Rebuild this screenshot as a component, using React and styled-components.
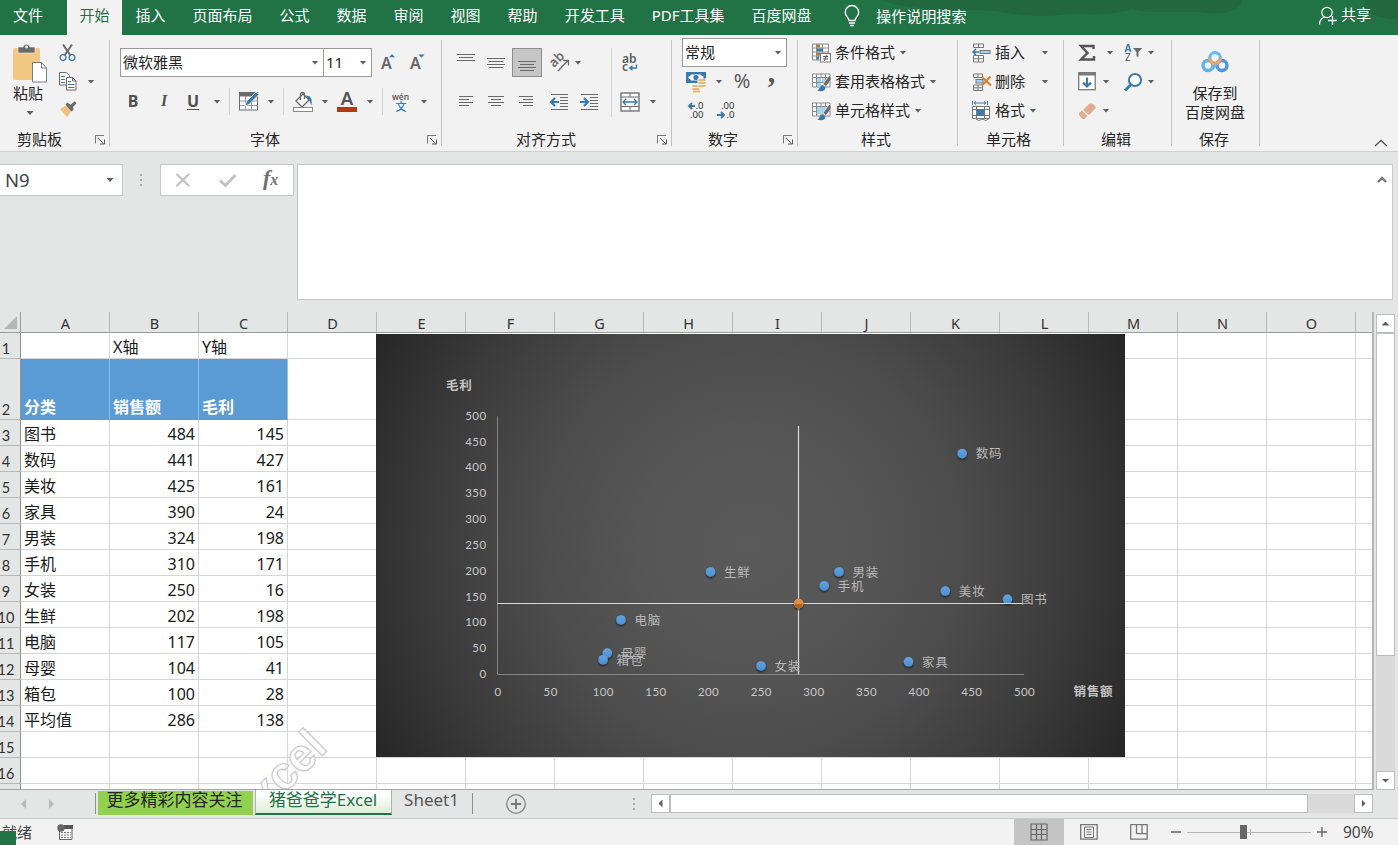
import React from 'react';
import styled, { createGlobalStyle } from 'styled-components';

const grey = '#6a6a6a';
const blue = '#3d7aab';
const sans = '"Noto Sans", "Noto Sans CJK SC", sans-serif';

const columns = ['A', 'B', 'C', 'D', 'E', 'F', 'G', 'H', 'I', 'J', 'K', 'L', 'M', 'N', 'O'];

const rows = [
    ['', 'X轴', 'Y轴'],
    ['分类', '销售额', '毛利'],
    ['图书', 484, 145],
    ['数码', 441, 427],
    ['美妆', 425, 161],
    ['家具', 390, 24],
    ['男装', 324, 198],
    ['手机', 310, 171],
    ['女装', 250, 16],
    ['生鲜', 202, 198],
    ['电脑', 117, 105],
    ['母婴', 104, 41],
    ['箱包', 100, 28],
    ['平均值', 286, 138],
    [],
    [],
];

const points = rows.slice(2, 13);
const ticks = [0, 50, 100, 150, 200, 250, 300, 350, 400, 450, 500];

const tabs = ['插入', '页面布局', '公式', '数据', '审阅', '视图', '帮助', '开发工具', 'PDF工具集', '百度网盘'];

/* ---------- icons ---------- */

function Icon({ w = 18, h = 18, children })
{
    return <IconSvg width={w} height={h} viewBox={`0 0 ${w} ${h}`} fill="none">{children}</IconSvg>;
}

function Lines({ ys, xs, w = 18, h = 20 })
{
    return (
        <Icon w={w} h={h}>
            {ys.map((y, i) => (
                <path key={y} d={`M${xs[i % xs.length][0]} ${y}.5H${xs[i % xs.length][1]}`} stroke={grey} />
            ))}
        </Icon>
    );
}

const PasteIcon = () => (
    <Icon w={36} h={40}>
        <rect x="1" y="5" width="27" height="32" rx="1.5" fill="#f2c883" />
        <path d="M6 4h5a3.6 3.6 0 0 1 7 0h5v6H6z" fill={grey} stroke="#f2f2f2" strokeWidth=".6" />
        <circle cx="14.5" cy="4" r="1.4" fill="#f2f2f2" />
        <path d="M20.5 19.500h9l5 5.500v14h-14z" fill="#fff" stroke="#7b7b7b" />
        <path d="M29.500 19.500v5.500h5" stroke="#7b7b7b" />
    </Icon>
);

const CutIcon = () => (
    <Icon w={18} h={19}>
        <path d="M4 1.500l7.500 11M13 1.500L5.500 12.500" stroke={grey} strokeWidth="2" />
        <circle cx="4" cy="14.500" r="2.900" stroke={blue} strokeWidth="1.300" />
        <circle cx="13" cy="14.500" r="2.900" stroke={blue} strokeWidth="1.300" />
    </Icon>
);

const CopyIcon = () => (
    <Icon w={18} h={19}>
        <path d="M.5.5h7l3 3v9.500h-10z" fill="#fff" stroke={grey} />
        <path d="M2 4.500h4M2 7.500h4M2 10.500h4" stroke={blue} />
        <path d="M7.500 5.500h6l3.500 3.500v9h-9.500z" fill="#fff" stroke={grey} />
        <path d="M13.500 5.500v3.500h3.500" stroke={grey} />
        <path d="M9 9.500h3M9 12.500h6.500M9 15.500h6.500" stroke={blue} />
    </Icon>
);

const BrushIcon = () => (
    <Icon w={18} h={17}>
        <path d="M1 8l6-3.500 5.500 5.500L8 16z" fill="#edc083" />
        <path d="M6.500 3.500l2-2 3.200 2.200L15.500.3l2 2-3.500 3.700.5 2.500-2 2z" fill={grey} />
    </Icon>
);

const BorderIcon = () => (
    <Icon w={20} h={19}>
        <rect x=".5" y=".5" width="18" height="17.500" fill="#fff" stroke={grey} />
        <path d="M0 0h19v4.500H0z" fill={grey} />
        <path d="M6.500 4v14M12.500 4v14M1 9h18M1 13.500h18" stroke="#9a9a9a" />
        <path d="M6 14l1.500-4.500L17 0l3 2.500-10 10z" fill={blue} stroke="#f2f2f2" strokeWidth=".8" />
    </Icon>
);

const FillIcon = () => (
    <Icon w={21} h={20}>
        <path d="M3 9l7-7 6 6-7 7z" fill="#fff" stroke={grey} strokeWidth="1.300" />
        <path d="M7.500 8V2.500a2 2 0 0 1 4 0V7" stroke={grey} strokeWidth="1.300" />
        <path d="M13 3.500c4.500 0 6.500 3 5.500 10-1-1-1-4-3-5.500z" fill={blue} />
        <rect x=".5" y="15.500" width="19" height="4" fill="#fff" stroke="#8a8a8a" />
    </Icon>
);

const FontColorIcon = () => (
    <Icon w={20} h={20}>
        <text x="10" y="13" textAnchor="middle" fontFamily={sans} fontSize="18.500" fontWeight="600" fill="#555">A</text>
        <rect y="15" width="20" height="5" fill="#b03a12" />
    </Icon>
);

const PinyinIcon = () => (
    <Icon w={18} h={20}>
        <text x="8.500" y="7.500" textAnchor="middle" fontFamily={sans} fontSize="8.500" fontWeight="500" fill="#4a4a4a">wén</text>
        <text x="9" y="18.500" textAnchor="middle" fontFamily={sans} fontSize="11" fontWeight="500" fill="#2f7fc4">文</text>
    </Icon>
);

const GrowIcon = ({ down }) => (
    <Icon w={18} h={20}>
        <text x="0" y="16" fontFamily={sans} fontSize="16" fontWeight="600" fill="#666">A</text>
        <path d={down ? 'M8.500 1.500h6l-3 3.200z' : 'M8 4.200h6l-3-3.200z'} fill={blue} />
    </Icon>
);

const OrientIcon = () => (
    <Icon w={20} h={20}>
        <text x="0" y="0" transform="translate(4 15) rotate(-45)" fontFamily={sans} fontSize="13" fontWeight="600" fill="#6f6f6f">ab</text>
        <path d="M8 18l9.500-10M13 7.500h5.500v5" stroke={grey} strokeWidth="1.300" />
    </Icon>
);

const WrapIcon = () => (
    <Icon w={19} h={20}>
        <text x="2" y="9.500" fontFamily={sans} fontSize="12" fontWeight="600" fill="#5c5c5c">ab</text>
        <text x="2" y="18" fontFamily={sans} fontSize="12" fontWeight="600" fill="#5c5c5c">c</text>
        <path d="M16.500 11.500v3.500h-6" stroke={blue} strokeWidth="1.300" />
        <path d="M8.500 15l4-3v6z" fill={blue} />
    </Icon>
);

const IndentIcon = ({ right }) => (
    <Icon w={19} h={18}>
        <path d="M1 1.500h17M10 4.500h8M10 7.500h8M10 10.500h8M10 13.500h8M1 16.500h17" stroke={grey} />
        <path d={right ? 'M0 9h7M4 5l4 4-4 4' : 'M9 9H2M5 5L1 9l4 4'} stroke={blue} strokeWidth="2.200" />
    </Icon>
);

const MergeIcon = () => (
    <Icon w={20} h={20}>
        <rect x="1" y="1" width="18" height="18" fill="#fff" stroke={grey} strokeWidth="1.300" />
        <path d="M1 5h18M1 14.500h18M10 1v4M10 14.500V19" stroke={grey} />
        <path d="M4 10h12M6 7l-3 3 3 3M14 7l3 3-3 3" stroke={blue} strokeWidth="1.400" />
    </Icon>
);

const MoneyIcon = () => (
    <Icon w={20} h={20}>
        <rect width="20" height="11" fill={blue} />
        <path d="M5 2.500h10a2.500 2.500 0 0 0 2.500 2v2a2.500 2.500 0 0 0-2.500 2H5a2.500 2.500 0 0 0-2.500-2v-2a2.500 2.500 0 0 0 2.500-2z" fill="#fff" />
        <circle cx="10" cy="5.500" r="2.600" fill={blue} />
        <path d="M11.500 6.500H20V17h-6v3H5.500v-7.500h6z" fill="#f2f2f2" />
        <path d="M12.500 8h7M12.500 11h7M12.500 14h7M6.500 14h5M6.500 17h7M7 19.500h7" stroke="#e9b870" strokeWidth="1.900" />
    </Icon>
);

const DecimalIcon = ({ less }) => (
    <Icon w={18} h={20}>
        <text x={less ? 17.5 : 16.5} y="8" textAnchor="end" fontFamily={sans} fontSize="9.500" fill="#333">{less ? '.00' : '.0'}</text>
        <text x={less ? 17.5 : 16.5} y="17" textAnchor="end" fontFamily={sans} fontSize="9.500" fill="#333">{less ? '.0' : '.00'}</text>
        <path d={less ? 'M0 14h6M4 11l3 3-3 3' : 'M2 5h6M5 2L2 5l3 3'} stroke={blue} strokeWidth="1.900" />
    </Icon>
);

const CondIcon = () => (
    <Icon w={19} h={20}>
        <path d="M.5 1h16v16H.5zM1 5h16M1 9h16M1 13h16M4.500 1v16M10.500 1v16" fill="#fff" stroke="#8a8a8a" />
        <path d="M5 1.500h3v3H5zM5 9.500h3v3H5z" fill="#c1772c" />
        <path d="M5 5.500h6v3H5zM5 13.500h2v3H5z" fill={blue} />
        <rect x="8.500" y="10.500" width="10" height="8.500" fill="#fff" stroke="#777" />
        <path d="M11 13.500h5M11 16h5M15 12l-3 6" stroke="#555" />
    </Icon>
);

const TableIcon = ({ single }) => (
    <Icon w={19} h={20}>
        <path d="M.5 2h17.500v13H.5zM1 5.500h17M1 10.500h17M4.500 2v13M9 2v3M13.500 2v13" fill="#fff" stroke="#8a8a8a" />
        {single ? <rect x="5" y="6" width="9" height="7" fill="#a6d2ec" /> : <path d="M5 6h4v4H5zM10 6h3v4h-3zM5 11h4v4H5z" fill="#a6d2ec" />}
        <path d="M11 12l6.500-9 1.500 2v3l-5 6.500z" fill={grey} stroke="#f2f2f2" strokeWidth=".7" />
        <path d="M5 18.500c3-.5 2-5 6-5.500l2.500 2.500c0 4-5 4.500-8.500 3z" fill={blue} />
    </Icon>
);

const InsertIcon = () => (
    <Icon w={19} h={20}>
        <path d="M1.500 1h10v3.500h-10zM6.500 1v3.500M1.500 12.500h10V19h-10zM1.500 15.800h10M6.500 12.500V19" fill="#fff" stroke="#777" />
        <rect x="8" y="7.500" width="10" height="3" fill="#a6d2ec" stroke="#777" />
        <path d="M1 9h6M4 6L1 9l3 3" stroke={blue} strokeWidth="1.500" />
    </Icon>
);

const DeleteIcon = () => (
    <Icon w={20} h={20}>
        <path d="M1.500 2h9v3.500h-9zM6 2v3.500M1.500 13h9v5.500h-9zM1.500 15.800h9M6 13v5.500" fill="#fff" stroke="#777" />
        <rect x="4" y="7.500" width="7" height="3.500" fill="#a6d2ec" stroke="#777" />
        <path d="M10 5l9 8.500M18.500 4.500L10 13.500" stroke="#d8802e" strokeWidth="2" />
    </Icon>
);

const FormatIcon = () => (
    <Icon w={19} h={20}>
        <path d="M2 2h12M4 .5L2 2l2 1.500M12 .5L14 2l-2 1.500M.5 0v4M15.500 0v4" stroke={blue} />
        <path d="M.5 5.500h17v12H.5zM1 8.500h16.500M1 14.500h16.500M4.500 5.500v12M12.500 5.500v12" fill="#fff" stroke="#777" />
        <rect x="5" y="8" width="7" height="7" fill={blue} />
        <path d="M4 18l3 1.500L10 18l4 1.500 3-2" stroke="#777" />
    </Icon>
);

const SigmaIcon = () => (
    <Icon><path d="M15.500 5V2H3l6.500 7L3 15.500h13v-3.500" stroke="#555" strokeWidth="2.400" /></Icon>
);

const FillDownIcon = () => (
    <Icon w={18} h={19}>
        <rect x=".7" y=".7" width="16.500" height="17" fill="#fff" stroke="#7a7a7a" strokeWidth="1.300" />
        <path d="M0 0h18v3.500H0z" fill="#7a7a7a" />
        <path d="M9 5.500v9M5 10.500l4 4 4-4" stroke={blue} strokeWidth="2.200" />
    </Icon>
);

const EraserIcon = () => (
    <Icon>
        <path d="M11.500 1.500h3l3 3v2L11 13l-6-5z" fill="#dfae91" />
        <path d="M4 8.500l5.500 5.500L6.500 17H4.500L1 13v-2z" fill="#dfae91" />
    </Icon>
);

const SortIcon = () => (
    <Icon>
        <text x=".5" y="8" fontFamily={sans} fontSize="10" fontWeight="700" fill={blue}>A</text>
        <text x="1" y="17" fontFamily={sans} fontSize="10" fill="#555">Z</text>
        <path d="M9 4h9l-3.500 4v4.500h-2V8z" fill={grey} />
    </Icon>
);

const FindIcon = () => (
    <Icon>
        <circle cx="11" cy="7" r="6.100" fill="#fff" stroke={blue} strokeWidth="2" />
        <path d="M7 11.500L1 17.500" stroke={blue} strokeWidth="2.800" />
    </Icon>
);

const DiskIcon = () => (
    <Icon w={28} h={24}>
        <circle cx="7" cy="15.500" r="5" stroke="#5eb4ea" strokeWidth="3.400" />
        <circle cx="21" cy="15.500" r="5" stroke="#4a97dc" strokeWidth="3.400" />
        <path d="M10.500 19l7-7.500" stroke="#66b6ea" strokeWidth="3.400" />
        <circle cx="14" cy="8" r="5.300" stroke="#6dbcf0" strokeWidth="3.200" />
        <path d="M8.700 8a5.300 5.300 0 0 0 10.600 0" stroke="#f2a063" strokeWidth="3.200" />
    </Icon>
);

const Launcher = () => (
    <Icon w={11} h={10}>
        <path d="M.5 8.500V.5H9" stroke="#777" />
        <path d="M3 3l5.500 5.500M9.500 4.500v4.500H5" stroke="#555" />
    </Icon>
);

/* ---------- ribbon ---------- */

function Tool({ w, ml, children })
{
    return <Slot $w={w} $ml={ml}>{children}</Slot>;
}

function MenuRow({ icon, text, gap = 4 })
{
    return (
        <ToolRow $pl={14}>
            <Tool w={19}>{icon}</Tool>
            <MenuText>{text}</MenuText>
            <Caret $ml={gap} />
        </ToolRow>
    );
}

function GroupLabel({ children, launcher, pr = 3 })
{
    return (
        <LabelRow>
            <LabelText $pr={pr}>{children}</LabelText>
            {launcher && <LauncherBox><Launcher /></LauncherBox>}
        </LabelRow>
    );
}

function Ribbon()
{
    return (
        <RibbonBar>
            <Group $w={110}>
                <GroupBody $row>
                    <PasteColumn>
                        <PasteIcon />
                        <span>粘贴</span>
                        <Caret $ml={0} />
                    </PasteColumn>
                    <SmallColumn>
                        <CutIcon />
                        <ToolRow $h={19}><CopyIcon /><Caret $ml={10} /></ToolRow>
                        <BrushIcon />
                    </SmallColumn>
                </GroupBody>
                <GroupLabel launcher pr={12}>剪贴板</GroupLabel>
            </Group>

            <Group $w={332}>
                <GroupBody $pt={8}>
                    <ToolRow $pl={10}>
                        <Combo $w={204}><span>微软雅黑</span><Caret /></Combo>
                        <Combo $w={49} $ml={-1}><span>11</span><Caret /></Combo>
                        <Tool w={18} ml={9}><GrowIcon /></Tool>
                        <Tool w={18} ml={11}><GrowIcon down /></Tool>
                    </ToolRow>
                    <ToolRow $pl={14} $mt={10}>
                        <Tool w={18}><Letter $bold>B</Letter></Tool>
                        <Tool w={18} ml={13}><Letter $italic>I</Letter></Tool>
                        <Tool w={18} ml={11}><Letter $under>U</Letter></Tool>
                        <Caret $ml={11} />
                        <Divider $ml={8} />
                        <Tool w={20} ml={9}><BorderIcon /></Tool>
                        <Caret $ml={8} />
                        <Divider $ml={8} />
                        <Tool w={20} ml={9}><FillIcon /></Tool>
                        <Caret $ml={8} />
                        <Tool w={20} ml={8}><FontColorIcon /></Tool>
                        <Caret $ml={9} />
                        <Divider $ml={8} />
                        <Tool w={18} ml={9}><PinyinIcon /></Tool>
                        <Caret $ml={10} />
                    </ToolRow>
                </GroupBody>
                <GroupLabel launcher>字体</GroupLabel>
            </Group>

            <Group $w={230}>
                <GroupBody $pt={8} $row>
                    <ToolColumn $w={169}>
                        <ToolRow $pl={15}>
                            <Lines ys={[1, 4, 7]} xs={[[0, 18], [2, 16]]} />
                            <Tool w={18} ml={12}><Lines ys={[5, 8, 11, 14]} xs={[[0, 18], [2, 16]]} /></Tool>
                            <Pressed><Lines ys={[8, 11, 14, 17]} xs={[[0, 18], [2, 16]]} /></Pressed>
                            <Tool w={19} ml={8}><OrientIcon /></Tool>
                            <Caret $ml={5} />
                        </ToolRow>
                        <ToolRow $pl={15} $mt={10}>
                            <Lines ys={[4, 7, 10, 13]} xs={[[2, 16], [2, 12]]} />
                            <Tool w={18} ml={12}><Lines ys={[4, 7, 10, 13]} xs={[[1, 17], [4, 14]]} /></Tool>
                            <Tool w={18} ml={12}><Lines ys={[4, 7, 10, 13]} xs={[[2, 16], [6, 16]]} /></Tool>
                            <Tool w={19} ml={15}><IndentIcon /></Tool>
                            <Tool w={19} ml={11}><IndentIcon right /></Tool>
                        </ToolRow>
                    </ToolColumn>
                    <Divider $h={69} />
                    <ToolColumn $w={58}>
                        <ToolRow $pl={8}><WrapIcon /></ToolRow>
                        <ToolRow $pl={8} $mt={10}><MergeIcon /><Caret $ml={9} /></ToolRow>
                    </ToolColumn>
                </GroupBody>
                <GroupLabel launcher>对齐方式</GroupLabel>
            </Group>

            <Group $w={126}>
                <GroupBody $mt={-2}>
                    <ToolRow $pl={10}><Combo $w={105}><span>常规</span><Caret /></Combo></ToolRow>
                    <ToolRow $pl={14}>
                        <MoneyIcon />
                        <Caret $ml={9} />
                        <Tool w={18} ml={10}><Percent>%</Percent></Tool>
                        <Tool w={9} ml={16}><Comma>,</Comma></Tool>
                    </ToolRow>
                    <ToolRow $pl={15}>
                        <DecimalIcon />
                        <Tool w={18} ml={12}><DecimalIcon less /></Tool>
                    </ToolRow>
                </GroupBody>
                <GroupLabel launcher pr={5}>数字</GroupLabel>
            </Group>

            <Group $w={160}>
                <GroupBody $mt={-2}>
                    <MenuRow icon={<CondIcon />} text="条件格式" />
                    <MenuRow icon={<TableIcon />} text="套用表格格式" />
                    <MenuRow icon={<TableIcon single />} text="单元格样式" />
                </GroupBody>
                <GroupLabel>样式</GroupLabel>
            </Group>

            <Group $w={106}>
                <GroupBody $mt={-2}>
                    <MenuRow icon={<InsertIcon />} text="插入" gap={16} />
                    <MenuRow icon={<DeleteIcon />} text="删除" gap={16} />
                    <MenuRow icon={<FormatIcon />} text="格式" />
                </GroupBody>
                <GroupLabel pr={4}>单元格</GroupLabel>
            </Group>

            <Group $w={108}>
                <GroupBody $mt={-2}>
                    <ToolRow $pl={14}>
                        <SigmaIcon />
                        <Caret $ml={10} />
                        <Tool w={18} ml={10}><SortIcon /></Tool>
                        <Caret $ml={5} />
                    </ToolRow>
                    <ToolRow $pl={14}>
                        <FillDownIcon />
                        <Caret $ml={6} />
                        <Tool w={18} ml={14}><FindIcon /></Tool>
                        <Caret $ml={5} />
                    </ToolRow>
                    <ToolRow $pl={14}>
                        <EraserIcon />
                        <Caret $ml={6} />
                    </ToolRow>
                </GroupBody>
                <GroupLabel>编辑</GroupLabel>
            </Group>

            <Group $w={88}>
                <GroupBody>
                    <SaveColumn>
                        <DiskIcon />
                        <span>保存到</span>
                        <span>百度网盘</span>
                    </SaveColumn>
                </GroupBody>
                <GroupLabel>保存</GroupLabel>
            </Group>

            <Collapse>
                <Icon w={14} h={8}><path d="M1 7l6-5.500L13 7" stroke="#555" strokeWidth="1.300" /></Icon>
            </Collapse>
        </RibbonBar>
    );
}

/* ---------- chart ---------- */

const px = v => 121.5 + v * 1.053;
const py = v => 340.5 - v * 0.5165;

function Chart()
{
    return (
        <ChartBox>
            <svg width="749" height="423" viewBox="0 0 749 423">
                <defs>
                    <linearGradient id="dot" x1="0" y1="0" x2="0" y2="1">
                        <stop offset="0" stopColor="#65a3dd" />
                        <stop offset="1" stopColor="#4a8fd3" />
                    </linearGradient>
                    <filter id="shade" x="-50%" y="-50%" width="200%" height="220%">
                        <feDropShadow dx="0" dy="1.500" stdDeviation="1.300" floodColor="#000" floodOpacity=".6" />
                    </filter>
                </defs>
                <path d={`M${px(0)} ${py(500)}V${py(0)}H${px(500)}`} fill="none" stroke="#868686" />
                <AxisTitle x="70" y="56">毛利</AxisTitle>
                <AxisTitle x="697.500" y="362">销售额</AxisTitle>
                {ticks.map(t => <Tick key={t} x="110.500" y={py(t) + 3.5} textAnchor="end">{t}</Tick>)}
                {ticks.map(t => <Tick key={t} x={px(t) + 0.5} y="362" textAnchor="middle">{t}</Tick>)}
                {points.map(([name, x, y]) => (
                    <circle key={name} cx={px(x) + 0.3} cy={py(y) - 0.3} r="4.800" fill="url(#dot)" filter="url(#shade)" />
                ))}
                <path d={`M${px(0)} 269.500H${px(500)}M422.500 92V${py(0)}`} stroke="#d9d9d9" strokeWidth="1.200" />
                <circle cx="422.700" cy="269.500" r="4.800" fill="#dc8f45" filter="url(#shade)" />
                <path d="M418.500 270h8a4 4 0 0 1-8 0z" fill="#a9641f" />
                {points.map(([name, x, y]) => (
                    <PointLabel key={name} x={px(x) + 13.8} y={py(y) + 4.5}>{name}</PointLabel>
                ))}
            </svg>
        </ChartBox>
    );
}

/* ---------- sheet ---------- */

function Sheet()
{
    return (
        <SheetArea>
            <Grid>
                <HeadRow>
                    <Corner><Icon w={13} h={13}><path d="M13 0v13H0z" fill="#b4b6b5" /></Icon></Corner>
                    {columns.map(c => <HeadCell key={c}>{c}</HeadCell>)}
                </HeadRow>
                {rows.map((row, i) => (
                    <Row key={i} $tall={i === 1}>
                        <RowNumber>{i + 1}</RowNumber>
                        {columns.map((c, j) => (
                            <Cell key={c} $title={i === 1 && j < 3} $number={typeof row[j] === 'number'}>{row[j]}</Cell>
                        ))}
                        <Rest />
                    </Row>
                ))}
                <Row $cut>
                    <RowNumber />
                    {columns.map(c => <Cell key={c} />)}
                    <Rest />
                </Row>
                <Watermark>
                    <svg width="90" height="80" viewBox="0 0 90 80">
                        <text transform="translate(84 37) rotate(-45)" textAnchor="end">Excel</text>
                    </svg>
                </Watermark>
                <Chart />
            </Grid>
            <VScroll>
                <ScrollButton><Triangle $dir="up" /></ScrollButton>
                <VThumb />
                <ScrollButton><Triangle $dir="down" /></ScrollButton>
            </VScroll>
        </SheetArea>
    );
}

function App()
{
    return (
        <Window>
            <GlobalStyle />
            <TabBar>
                <Artwork width="530" height="35" viewBox="0 0 530 35">
                    <path d="M12 0h250v10c-30 8-50 2-70 5-40 4-60-6-90-5-30 0-70-2-90-10z" fill="#21683f" />
                    <path d="M245 0h130c-6 14-22 15-45 12-30-2-60 6-85-12z" fill="#21683f" />
                    <path d="M497 0h33v20c-15-2-38-4-33-20z" fill="#21683f" />
                </Artwork>
                <FileTab>文件</FileTab>
                <ActiveTab>开始</ActiveTab>
                {tabs.map(t => <Tab key={t}>{t}</Tab>)}
                <Search>
                    <Icon w={16} h={22}>
                        <path d="M5 15.500c0-3-3.800-4-3.800-8.200a6.700 6.700 0 0 1 13.500 0c0 4.200-3.700 5.200-3.700 8.200z" stroke="#fff" strokeWidth="1.400" />
                        <path d="M5 18h6M6 20.500h4" stroke="#fff" strokeWidth="1.400" />
                    </Icon>
                    操作说明搜索
                </Search>
                <Share>
                    <Icon w={20} h={20}>
                        <circle cx="9" cy="6.500" r="5.200" stroke="#fff" strokeWidth="1.200" />
                        <path d="M1.500 18.500c0-4 2.500-6.500 5-7.500M14.500 10v9M10 14.500h9" stroke="#fff" strokeWidth="1.300" />
                    </Icon>
                    <span>共享</span>
                </Share>
            </TabBar>
            <Ribbon />
            <FormulaBar>
                <NameBox><span>N9</span><Caret /></NameBox>
                <Dots><i /><i /><i /></Dots>
                <FormulaTools>
                    <Icon w={16} h={16}><path d="M1.500 2L14 14M14 2L1.500 14" stroke="#c2c2c2" strokeWidth="2.200" /></Icon>
                    <Icon w={18} h={15}><path d="M1 7.500l5.500 5L16.500 2" stroke="#c2c2c2" strokeWidth="3" /></Icon>
                    <Fx>f<small>x</small></Fx>
                </FormulaTools>
                <FormulaInput>
                    <Icon w={10} h={7}><path d="M1 6l4-4 4 4" stroke="#777" strokeWidth="2.400" /></Icon>
                </FormulaInput>
            </FormulaBar>
            <Sheet />
            <SheetBar>
                <Nav>
                    <Triangle $dir="left" $light />
                    <Triangle $dir="right" $light />
                </Nav>
                <TabLine $ml={39} />
                <GreenTab>更多精彩内容关注</GreenTab>
                <CurrentTab>猪爸爸学Excel</CurrentTab>
                <PlainTab>Sheet1</PlainTab>
                <TabLine $ml={0} />
                <AddSheet>
                    <Icon w={22} h={22}>
                        <circle cx="11" cy="11" r="9.300" stroke="#858585" strokeWidth="1.300" />
                        <path d="M11 6v10M6 11h10" stroke="#757575" strokeWidth="1.800" />
                    </Icon>
                </AddSheet>
                <Dots $ml={106} $h={28}><i /><i /><i /></Dots>
                <HScroll>
                    <ScrollButton><Triangle $dir="left" /></ScrollButton>
                    <HThumb />
                    <ScrollButton><Triangle $dir="right" /></ScrollButton>
                </HScroll>
            </SheetBar>
            <StatusBar>
                <Ready>就绪</Ready>
                <Icon w={16} h={16}>
                    <path d="M2.500 4v11.500h12.500V2H8" fill="#fff" stroke="#666" />
                    <path d="M7 1h9v4H7z" fill="#555" />
                    <path d="M4 8.500h10M4 11h10M4 13.500h10" stroke="#777" strokeDasharray="2 1" />
                    <circle cx="4" cy="4" r="3.700" fill="#666" />
                </Icon>
                <Views>
                    <ViewButton $on>
                        <Icon><path d="M1 1h16v16H1zM6.500 1v16M11.500 1v16M1 6.500h16M1 11.500h16" stroke="#666" strokeWidth="1.200" /></Icon>
                    </ViewButton>
                    <ViewButton>
                        <Icon><path d="M.7 1.700h16.500v14.500H.7z" stroke="#777" strokeWidth="1.300" /><path d="M4.500 4h9v10.500h-9zM6.500 6.500h5M6.500 9h5M6.500 11.500h5" stroke="#777" /></Icon>
                    </ViewButton>
                    <ViewButton>
                        <Icon><path d="M.7 1.700h16.500v14.500H.7zM6.500 1.700v9h5.500v-9M12 10.700h5" stroke="#777" strokeWidth="1.300" /></Icon>
                    </ViewButton>
                </Views>
                <Icon w={10} h={10}><path d="M0 5h10" stroke="#555" strokeWidth="1.400" /></Icon>
                <Slider><Knob /><Mark /></Slider>
                <Icon w={10} h={10}><path d="M0 5h10M5 0v10" stroke="#666" strokeWidth="1.400" /></Icon>
                <Zoom>90%</Zoom>
                <GreenBlock />
            </StatusBar>
        </Window>
    );
}

export default App;

const GlobalStyle = createGlobalStyle`
    *
    {
        box-sizing: border-box;
    }

    body
    {
        margin: 0;
        overflow: hidden;
        font-family: "Noto Sans", "Noto Sans CJK SC", sans-serif;
        font-size: 15px;
        color: #262626;
    }
`

const IconSvg = styled.svg`
    flex: none;
    overflow: visible;
`

const Window = styled.div`
    display: flex;
    flex-direction: column;
    width: 1398px;
    height: 845px;
    background: #e4e6e5;
    white-space: nowrap;
`

const TabBar = styled.div`
    position: relative;
    display: flex;
    height: 35px;
    background: #217346;
    color: #fff;
    line-height: 30px;
`

const Artwork = styled.svg`
    position: absolute;
    right: 0;
    top: 0;
`

const Tab = styled.div`
    padding: 0 13.5px;
`

const FileTab = styled(Tab)`
    width: 67px;
    padding-left: 13px;
`

const ActiveTab = styled(Tab)`
    padding: 0 12.5px;
    background: #f2f2f2;
    color: #217346;
`

const Search = styled.div`
    position: relative;
    display: flex;
    align-items: center;
    gap: 16px;
    height: 32px;
    margin-left: 19px;
    font-size: 15.1px;
`

const Share = styled.div`
    position: relative;
    display: flex;
    gap: 3px;
    margin: 6px 27px 0 auto;
    line-height: 16px;
`

const RibbonBar = styled.div`
    display: flex;
    height: 117px;
    padding-top: 5px;
    background: #f2f2f2;
    border-bottom: 1px solid #cfd0d0;
`

const Group = styled.div`
    flex: none;
    display: flex;
    flex-direction: column;
    width: ${p => p.$w}px;
    height: 106px;
    border-right: 1px solid #c3c3c3;
`

const GroupBody = styled.div`
    display: flex;
    flex-direction: ${p => (p.$row ? 'row' : 'column')};
    height: ${p => 94 - (p.$mt || 0)}px;
    margin-top: ${p => p.$mt || 0}px;
    padding-top: ${p => p.$pt || 0}px;
`

const LabelRow = styled.div`
    display: flex;
    height: 11px;
    line-height: 11px;
`

const LabelText = styled.div`
    flex: 1;
    padding-right: ${p => p.$pr}px;
    text-align: center;
`

const LauncherBox = styled.div`
    display: flex;
    width: 18px;
    padding: 1px 0 0 4px;
`

const ToolRow = styled.div`
    flex: none;
    display: flex;
    align-items: center;
    height: ${p => p.$h || 29}px;
    margin-top: ${p => p.$mt || 0}px;
    padding-left: ${p => p.$pl || 0}px;
`

const ToolColumn = styled.div`
    width: ${p => p.$w}px;
`

const Slot = styled.div`
    flex: none;
    display: flex;
    justify-content: center;
    width: ${p => p.$w}px;
    margin-left: ${p => p.$ml || 0}px;
`

const Caret = styled.span`
    flex: none;
    width: 8px;
    height: 4px;
    margin-left: ${p => (p.$ml === undefined ? 'auto' : `${p.$ml}px`)};
    background: #5e5e5e;
    clip-path: polygon(6% 0, 94% 0, 50% 100%);
`

const Divider = styled.div`
    flex: none;
    width: 1px;
    height: ${p => p.$h || 27}px;
    margin-left: ${p => p.$ml || 0}px;
    background: #d2d2d2;
`

const PasteColumn = styled.div`
    display: flex;
    flex-direction: column;
    align-items: center;
    width: 56px;
    padding: 3px 0 0 4px;
    line-height: 20px;

    span:first-of-type
    {
        margin: 0 4px 8px 0;
    }
`

const SmallColumn = styled.div`
    display: flex;
    flex-direction: column;
    gap: 10px;
    padding: 3px 0 0 3px;
`

const Combo = styled.div`
    flex: none;
    display: flex;
    align-items: center;
    width: ${p => p.$w}px;
    height: 29px;
    margin-left: ${p => p.$ml || 0}px;
    padding: 0 4px 0 2px;
    background: #fff;
    border: 1px solid #999;

    span:first-child
    {
        margin-bottom: 2px;
    }
`

const Pressed = styled.div`
    display: flex;
    justify-content: center;
    align-items: center;
    width: 30px;
    height: 29px;
    margin-left: 7px;
    background: #c6c6c6;
    border: 1px solid #8e8e8e;
`

const Letter = styled.span`
    margin-bottom: 2px;
    font-size: 16px;
    line-height: 20px;
    font-weight: 700;
    font-family: ${p => (p.$italic ? '"Liberation Serif", serif' : '"Noto Sans", sans-serif')};
    font-style: ${p => (p.$italic ? 'italic' : 'normal')};
    color: #505050;
    text-decoration: ${p => (p.$under ? 'underline' : 'none')};
    text-underline-offset: 2px;
`

const Percent = styled.span`
    margin-bottom: 2px;
    font-size: 20px;
    line-height: 24px;
    color: #5a5a5a;
`

const Comma = styled.span`
    height: 24px;
    font-family: "Liberation Serif", serif;
    font-size: 30px;
    line-height: 4px;
    font-weight: 700;
    color: #5a5a5a;
`

const MenuText = styled.span`
    margin: 0 0 2px 4px;
`

const SaveColumn = styled.div`
    display: flex;
    flex-direction: column;
    align-items: center;
    padding: 10px 1px 0 0;
    line-height: 19px;

    svg
    {
        margin-bottom: 10px;
    }
`

const Collapse = styled.div`
    margin: 99px 10px 0 auto;
    line-height: 0;
`

const FormulaBar = styled.div`
    display: flex;
    align-items: flex-start;
    height: 160px;
    padding-top: 12px;
`

const NameBox = styled.div`
    display: flex;
    align-items: center;
    width: 123px;
    height: 32px;
    padding: 0 8px 0 5px;
    background: #fff;
    border: 1px solid #c6c8c7;
    border-left: 0;
    font-size: 18.5px;
    color: #444;

    span:first-child
    {
        margin-bottom: 2px;
    }
`

const Dots = styled.div`
    display: flex;
    flex-direction: column;
    justify-content: center;
    gap: 3px;
    height: ${p => p.$h || 32}px;
    margin-left: ${p => p.$ml || 17}px;

    i
    {
        width: 2px;
        height: 2px;
        background: #aaa;
    }
`

const FormulaTools = styled.div`
    display: flex;
    align-items: center;
    gap: 28px;
    width: 134px;
    height: 32px;
    margin-left: 18px;
    padding-left: 14px;
    background: #fff;
    border: 1px solid #c6c8c7;
`

const Fx = styled.span`
    margin: -2px 0 0 -2px;
    font-family: "Liberation Serif", serif;
    font-style: italic;
    font-size: 22px;
    font-weight: 700;
    line-height: 24px;
    color: #707070;

    small
    {
        font-size: 16px;
    }
`

const FormulaInput = styled.div`
    display: flex;
    justify-content: flex-end;
    width: 1096px;
    height: 136px;
    margin-left: 3px;
    padding: 11px 5px;
    background: #fff;
    border: 1px solid #c6c8c7;
`

const SheetArea = styled.div`
    display: flex;
    height: 478px;
`

const Grid = styled.div`
    position: relative;
    width: 1374px;
    height: 478px;
    border-right: 2px solid #b3b5b4;
    border-bottom: 1px solid #a6a6a6;
    overflow: hidden;
`

const HeadRow = styled.div`
    display: flex;
    height: 21px;
    border-bottom: 1px solid #9b9d9c;
`

const Corner = styled.div`
    display: flex;
    flex: none;
    justify-content: flex-end;
    align-items: flex-end;
    width: 21px;
    padding: 0 3px 3px 0;
    border-right: 1px solid #9b9d9c;
`

const HeadCell = styled.div`
    flex: none;
    width: 89px;
    padding-left: 1px;
    border-right: 1px solid #b8bab9;
    font-size: 14.5px;
    line-height: 23px;
    text-align: center;
    color: #333;
`

const Row = styled.div`
    display: flex;
    height: ${p => (p.$tall ? 61 : p.$cut ? 6 : 26)}px;
    background: #fff;
`

const RowNumber = styled.div`
    display: flex;
    flex: none;
    justify-content: center;
    align-items: flex-end;
    width: 21px;
    padding-right: 8px;
    background: #e4e6e5;
    border-right: 1px solid #8f9190;
    border-bottom: 1px solid #b8bab9;
    font-family: Lato, sans-serif;
    font-size: 14.5px;
    line-height: 19px;
    color: #333;
`

const Cell = styled.div`
    display: flex;
    flex: none;
    align-items: flex-end;
    justify-content: ${p => (p.$number ? 'flex-end' : 'flex-start')};
    width: 89px;
    padding: 0 3px ${p => (p.$title ? 1 : 0)}px;
    background: ${p => (p.$title ? '#5b9bd5' : 'transparent')};
    border-right: 1px solid ${p => (p.$title ? '#8cc3e6' : '#d6d6d6')};
    border-bottom: 1px solid ${p => (p.$title ? '#5b9bd5' : '#d6d6d6')};
    color: ${p => (p.$title ? '#fff' : '#1a1a1a')};
    font-size: 16px;
    font-weight: ${p => (p.$title ? 700 : 400)};
    line-height: 22px;
`

const Rest = styled.div`
    flex: 1;
    border-bottom: 1px solid #d6d6d6;
`

const Watermark = styled.div`
    position: absolute;
    left: 245px;
    top: 400px;
    line-height: 0;

    text
    {
        font: 700 46px "Liberation Sans", sans-serif;
        fill: #fff;
        stroke: #cacaca;
        stroke-width: 1.2px;
    }
`

const ChartBox = styled.div`
    position: absolute;
    left: 376px;
    top: 22px;
    width: 749px;
    height: 423px;
    background: radial-gradient(circle farthest-corner at 50% 50%, #5a5a5a, #565656 25%, #4c4c4c 50%, #3b3b3b 75%, #262626);
`

const AxisTitle = styled.text`
    font: 700 12.5px "Noto Sans CJK SC", sans-serif;
    letter-spacing: 0.8px;
    fill: #c4c4c4;
`

const Tick = styled.text`
    font: 400 11.5px Lato, sans-serif;
    letter-spacing: 0.4px;
    fill: #c8c8c8;
`

const PointLabel = styled.text`
    font: 400 12.5px "Noto Sans CJK SC", sans-serif;
    letter-spacing: 0.8px;
    fill: #b9b9b9;
`

const VScroll = styled.div`
    display: flex;
    flex-direction: column;
    width: 19px;
    height: 476px;
    margin: 2px 0 0 2px;
    background: #dadada;
`

const ScrollButton = styled.div`
    flex: none;
    display: flex;
    justify-content: center;
    align-items: center;
    width: 19px;
    height: 19px;
    background: #fff;
    border: 1px solid #bcbebd;
`

const VThumb = styled.div`
    height: 323px;
    margin-bottom: 115px;
    background: #fff;
    border: 1px solid #bcbebd;
`

const shapes = {
    up: 'polygon(0 100%, 50% 0, 100% 100%)',
    down: 'polygon(0 0, 100% 0, 50% 100%)',
    left: 'polygon(100% 0, 100% 100%, 0 50%)',
    right: 'polygon(0 0, 100% 50%, 0 100%)',
}

const Triangle = styled.span`
    width: ${p => (p.$dir === 'up' || p.$dir === 'down' ? 8 : p.$light ? 5 : 4)}px;
    height: ${p => (p.$dir === 'up' || p.$dir === 'down' ? 4 : p.$light ? 10 : 8)}px;
    background: ${p => (p.$light ? '#b9bbba' : '#5e5e5e')};
    clip-path: ${p => shapes[p.$dir]};
`

const SheetBar = styled.div`
    display: flex;
    height: 29px;
    border-bottom: 1px solid #c9cbca;
    font-size: 17px;
    line-height: 20px;
`

const Nav = styled.div`
    display: flex;
    align-items: center;
    gap: 23px;
    width: 56px;
    padding-left: 21px;
`

const TabLine = styled.div`
    width: 1px;
    height: 21px;
    margin: 3px 0 0 ${p => p.$ml}px;
    background: #8f9190;
`

const GreenTab = styled.div`
    width: 155px;
    height: 24px;
    margin: 1px 0 0 2px;
    padding-right: 2px;
    background: #92d050;
    line-height: 18px;
    text-align: center;
`

const CurrentTab = styled.div`
    width: 137px;
    height: 25px;
    margin-left: 2px;
    padding-right: 1px;
    background: linear-gradient(#fff 20%, #e0ecd6);
    border: 1px solid #b0b0b0;
    border-top: 0;
    border-bottom: 2px solid #217346;
    color: #217346;
    text-align: center;
`

const PlainTab = styled.div`
    width: 80px;
    padding-right: 1px;
    text-align: center;
    color: #555;
`

const AddSheet = styled.div`
    margin: 3px 0 0 32px;
    line-height: 0;
`

const HScroll = styled.div`
    display: flex;
    width: 722px;
    height: 19px;
    margin: 4px 0 0 16px;
    background: #dadada;
`

const HThumb = styled.div`
    width: 638px;
    margin-right: auto;
    background: #fff;
    border: 1px solid #bcbebd;
`

const StatusBar = styled.div`
    position: relative;
    display: flex;
    align-items: center;
    height: 26px;
    background: #f2f2f2;
    color: #444;
`

const Ready = styled.div`
    width: 57px;
    padding-left: 2px;
    line-height: 24px;
`

const GreenBlock = styled.div`
    position: absolute;
    left: 0;
    bottom: 0;
    width: 16px;
    height: 14px;
    background: #217346;
`

const Views = styled.div`
    display: flex;
    margin: 0 7px 0 auto;
`

const ViewButton = styled.div`
    display: flex;
    align-items: center;
    justify-content: center;
    width: 50px;
    height: 26px;
    background: ${p => (p.$on ? '#c5c5c5' : 'transparent')};
`

const Slider = styled.div`
    display: flex;
    align-items: center;
    width: 124px;
    height: 1px;
    margin: 0 6px;
    background: #b5b5b5;
`

const Knob = styled.div`
    width: 7px;
    height: 14px;
    margin-left: 53px;
    background: #666;
`

const Mark = styled.div`
    width: 1px;
    height: 6px;
    margin-left: 3px;
    background: #b5b5b5;
`

const Zoom = styled.div`
    width: 71px;
    padding-left: 16px;
    font-size: 15.5px;
`
